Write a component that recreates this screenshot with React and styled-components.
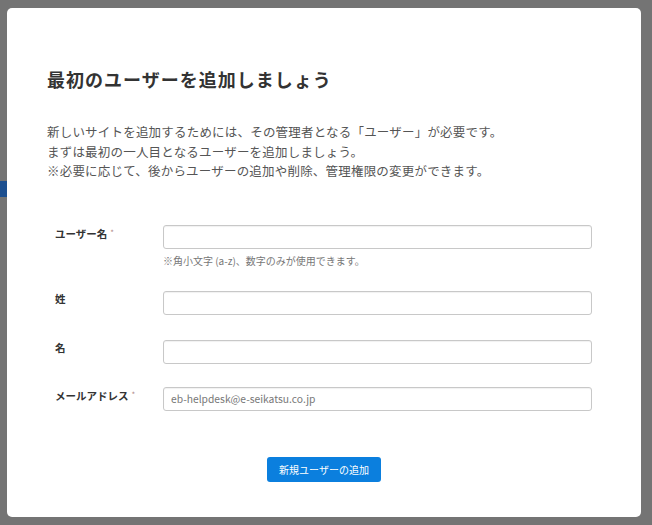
import React from "react";
import styled, { createGlobalStyle } from "styled-components";

const GlobalStyle = createGlobalStyle`
  html, body {
    margin: 0;
    padding: 0;
    background: #747474;
    font-family: "Noto Sans CJK JP", "Noto Sans", sans-serif;
  }
  * { box-sizing: border-box; }
`;

const fields = [
  { label: "ユーザー名", required: true, hint: "※角小文字 (a-z)、数字のみが使用できます。" },
  { label: "姓", gap: 25 },
  { label: "名", gap: 23 },
  { label: "メールアドレス", required: true, value: "eb-helpdesk@e-seikatsu.co.jp" },
];

const App = () => {
  return (
    <>
      <GlobalStyle />
      <Backdrop>
        <Peek />
        <Modal>
          <Title>最初のユーザーを追加しましょう</Title>
          <Description>
            新しいサイトを追加するためには、その管理者となる「ユーザー」が必要です。
            <br />
            まずは最初の一人目となるユーザーを追加しましょう。
            <br />
            ※必要に応じて、後からユーザーの追加や削除、管理権限の変更ができます。
          </Description>
          <Form>
            {fields.map((f, i) => (
              <Row key={i} $gap={f.gap ?? 24}>
                <Label>
                  {f.label}
                  {f.required && <Req>*</Req>}
                </Label>
                <Field>
                  <Input defaultValue={f.value || ""} />
                  {f.hint && <Hint>{f.hint}</Hint>}
                </Field>
              </Row>
            ))}
          </Form>
          <Actions>
            <Button>新規ユーザーの追加</Button>
          </Actions>
        </Modal>
      </Backdrop>
    </>
  );
};

export default App;

const Backdrop = styled.div`
  position: relative;
  width: 652px;
  height: 525px;
  padding: 8px 11px 8px 7px;
  overflow: hidden;
`;

const Peek = styled.div`
  position: absolute;
  left: 0;
  top: 181px;
  width: 7px;
  height: 16px;
  background: #1d4f8f;
`;

const Modal = styled.div`
  position: relative;
  height: 509px;
  background: #fff;
  border-radius: 5px;
  padding: 60px 40px 0 40px;
`;

const Title = styled.h1`
  margin: 0;
  font-size: 18px;
  line-height: 22px;
  font-weight: 700;
  color: #333;
  letter-spacing: 1px;
`;

const Description = styled.p`
  margin: 32px 0 0;
  font-size: 12.5px;
  line-height: 19.5px;
  color: #555;
  letter-spacing: 0.2px;
`;

const Form = styled.div`
  margin-top: 44px;
  padding: 0 9px 0 8px;
  display: flex;
  flex-direction: column;
`;

const Row = styled.div`
  display: flex;
  align-items: flex-start;
  margin-bottom: ${(p) => p.$gap}px;
`;

const Label = styled.div`
  width: 108px;
  flex-shrink: 0;
  padding-top: 1px;
  font-size: 10.5px;
  line-height: 14px;
  font-weight: 700;
  color: #333;
`;

const Req = styled.sup`
  font-size: 8px;
  font-weight: 400;
  color: #b08a8a;
  margin-left: 3px;
  vertical-align: 2px;
`;

const Field = styled.div`
  flex: 1;
  display: flex;
  flex-direction: column;
`;

const Input = styled.input`
  height: 24px;
  width: 100%;
  border: 1px solid #c8c8c8;
  border-radius: 3px;
  padding: 0 7px;
  font-family: inherit;
  font-size: 10.3px;
  color: #777;
  box-shadow: inset 0 1px 1px rgba(0, 0, 0, 0.06);
  outline: none;
`;

const Hint = styled.div`
  margin-top: 6px;
  font-size: 10px;
  line-height: 12px;
  color: #777;
`;

const Actions = styled.div`
  display: flex;
  justify-content: center;
  margin-top: 22px;
`;

const Button = styled.button`
  width: 114px;
  height: 25px;
  border: none;
  border-radius: 3px;
  background: #0b7fde;
  color: #fff;
  font-family: inherit;
  font-size: 10px;
  cursor: pointer;
`;
